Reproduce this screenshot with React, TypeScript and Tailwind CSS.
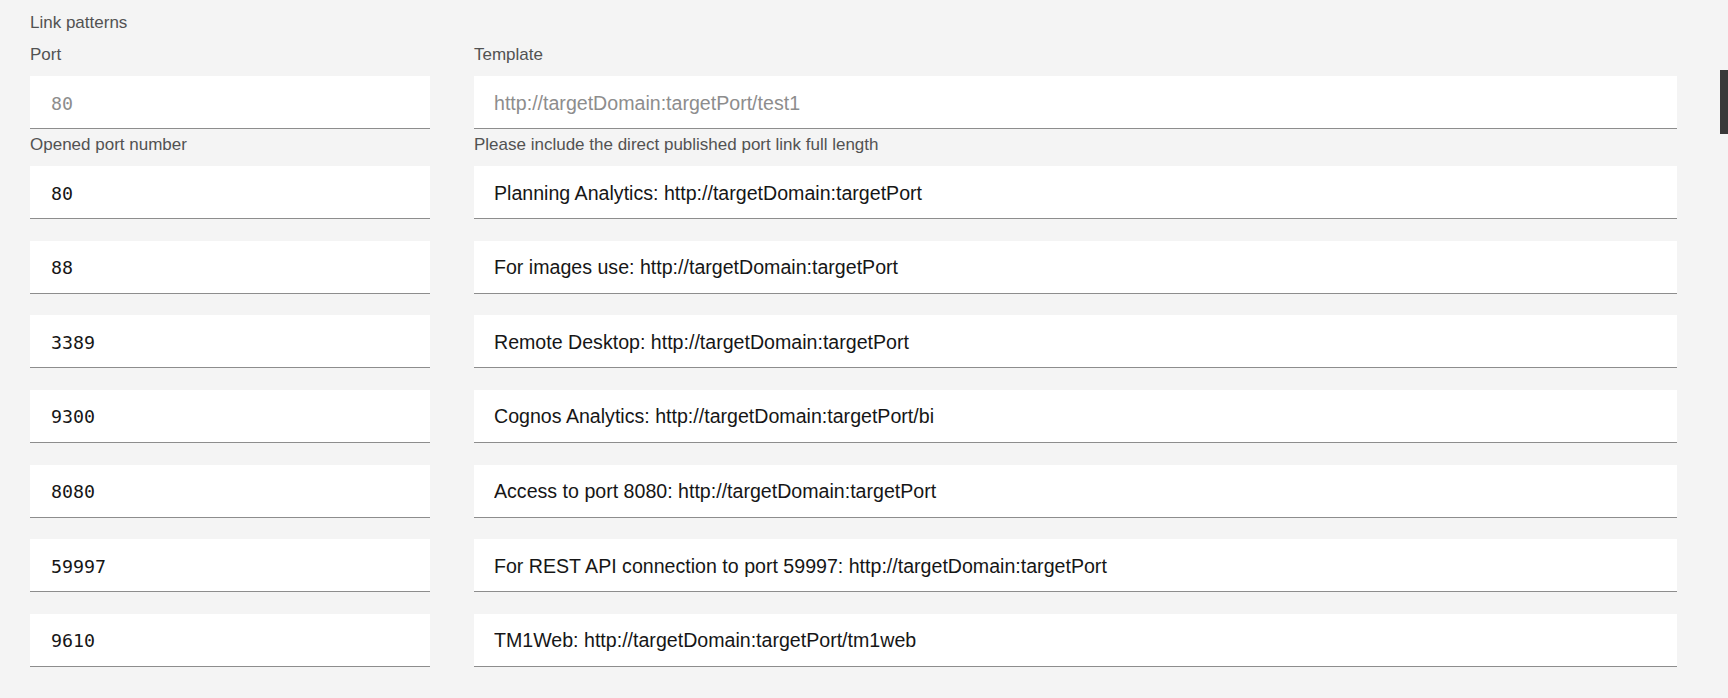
import React from "react";

const rows = [
  { port: "80", template: "Planning Analytics: http://targetDomain:targetPort" },
  { port: "88", template: "For images use: http://targetDomain:targetPort" },
  { port: "3389", template: "Remote Desktop: http://targetDomain:targetPort" },
  { port: "9300", template: "Cognos Analytics: http://targetDomain:targetPort/bi" },
  { port: "8080", template: "Access to port 8080: http://targetDomain:targetPort" },
  { port: "59997", template: "For REST API connection to port 59997: http://targetDomain:targetPort" },
  { port: "9610", template: "TM1Web: http://targetDomain:targetPort/tm1web" },
];

const sans = "font-['Liberation_Sans',Arial,sans-serif]";
const mono = "font-['DejaVu_Sans_Mono','Liberation_Mono',monospace]";

export default function App() {
  return (
    <div className={`relative min-h-screen bg-[#f4f4f4] pl-[30px] pr-[51px] pt-[12px] ${sans}`}>
      <div className="text-[17px] leading-[22px] text-[#525252]">Link patterns</div>

      <div className="mt-[10px] grid grid-cols-[400px_1fr] gap-x-[44px]">
        <div>
          <label className="block text-[17px] leading-[22px] text-[#525252]">Port</label>
          <input
            readOnly
            placeholder="80"
            className={`mt-[10px] block h-[53px] w-full border-b border-[#8d8d8d] bg-white pl-[21px] pr-[20px] pt-[2px] text-[18.3px] text-[#161616] outline-none placeholder:text-[#8d8d8d] ${mono}`}
          />
          <div className="mt-[5px] text-[17px] leading-[22px] text-[#525252]">Opened port number</div>
        </div>
        <div>
          <label className="block text-[17px] leading-[22px] text-[#525252]">Template</label>
          <input
            readOnly
            placeholder="http://targetDomain:targetPort/test1"
            className="mt-[10px] block h-[53px] w-full border-b border-[#8d8d8d] bg-white px-[20px] pt-[2px] text-[19.6px] text-[#161616] outline-none placeholder:text-[#8d8d8d]"
          />
          <div className="mt-[5px] text-[17px] leading-[22px] text-[#525252]">
            Please include the direct published port link full length
          </div>
        </div>
      </div>

      <div className="mt-[10px] flex flex-col gap-[21.67px]">
        {rows.map((r) => (
          <div key={r.port} className="grid grid-cols-[400px_1fr] gap-x-[44px]">
            <input
              readOnly
              defaultValue={r.port}
              className={`block h-[53px] w-full border-b border-[#8d8d8d] bg-white pl-[21px] pr-[20px] pt-[2px] text-[18.3px] text-[#161616] outline-none ${mono}`}
            />
            <input
              readOnly
              defaultValue={r.template}
              className="block h-[53px] w-full border-b border-[#8d8d8d] bg-white px-[20px] pt-[2px] text-[19.6px] text-[#161616] outline-none"
            />
          </div>
        ))}
      </div>

      <div className="absolute right-0 top-[70px] h-[64px] w-[8px] bg-[#393939]" />
    </div>
  );
}
